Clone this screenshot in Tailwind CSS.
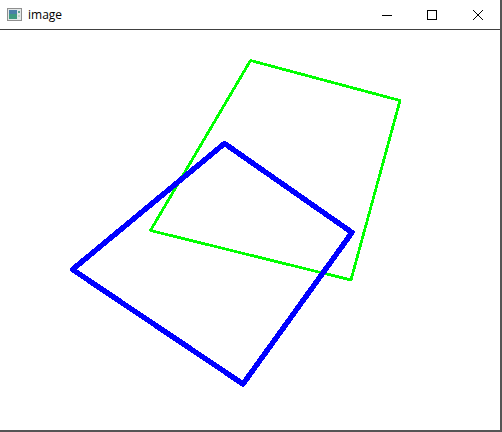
<!DOCTYPE html>
<html lang="en">
<head>
    <meta charset="UTF-8">
    <title>image</title>
    <script src="https://cdn.jsdelivr.net/npm/@tailwindcss/browser@4"></script>
</head>
<body class="bg-white overflow-hidden">
    <div class="w-[502px] h-[432px] flex flex-col bg-white border-r-2 border-b-2 border-[#555555]">
        <!-- title bar -->
        <header class="h-[30px] shrink-0 flex items-center justify-between border-b border-[#404040]">
            <div class="flex items-center pl-[7px] gap-[6px]">
                <svg width="15" height="13" viewBox="0 0 15 13" class="block mb-[1px]">
                    <rect x="0.5" y="0.5" width="14" height="12" fill="#e4e8e8" stroke="#8f8f8f"/>
                    <rect x="2" y="2" width="8" height="9" fill="#3f9a80"/>
                    <rect x="2" y="2" width="8" height="4" fill="#4a7fa8"/>
                    <rect x="11" y="3" width="2" height="2" fill="#5fa58f"/>
                    <rect x="11" y="7" width="2" height="2" fill="#c2d4c8"/>
                </svg>
                <span class="text-[12px] leading-none text-black font-['Open_Sans',sans-serif]">image</span>
            </div>
            <div class="flex h-full">
                <div class="w-[45px] h-full flex items-center justify-center pr-[1px]">
                    <svg width="10" height="10" viewBox="0 0 10 10" class="block"><path d="M0 5.5H10" stroke="#000" fill="none"/></svg>
                </div>
                <div class="w-[45px] h-full flex items-center justify-center pr-[1px]">
                    <svg width="10" height="10" viewBox="0 0 10 10" class="block"><rect x="0.5" y="0.5" width="9" height="9" stroke="#000" fill="none"/></svg>
                </div>
                <div class="w-[45px] h-full flex items-center justify-center">
                    <svg width="10" height="10" viewBox="0 0 10 10" class="block"><path d="M0 0L10 10M10 0L0 10" stroke="#000" fill="none"/></svg>
                </div>
            </div>
        </header>
        <!-- image area -->
        <main class="flex-1 min-h-0">
            <svg width="500" height="400" viewBox="0 30 500 400" class="block" shape-rendering="crispEdges">
                <polygon points="250.5,60.5 400,100.5 351,280 150.5,230.5" fill="none" stroke="#00ff00" stroke-width="2.8" stroke-linejoin="round"/>
                <polygon points="224.5,143.5 352,232.5 243,384 72.5,269.5" fill="none" stroke="#0000ff" stroke-width="5.4" stroke-linejoin="round"/>
            </svg>
        </main>
    </div>
</body>
</html>
